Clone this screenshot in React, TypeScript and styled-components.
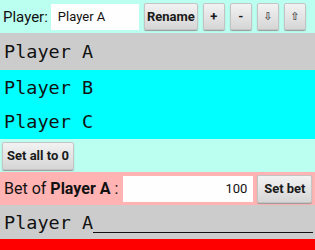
import { FC } from 'react';
import styled, { createGlobalStyle } from 'styled-components';

const GlobalStyle = createGlobalStyle`
  html, body {
    margin: 0;
    padding: 0;
    background: #bbfff0;
  }
  body {
    font-family: Roboto, 'Liberation Sans', sans-serif;
    width: 315px;
    height: 250px;
    overflow: hidden;
  }
`;

const Page = styled.div`
  display: flex;
  flex-direction: column;
  width: 315px;
`;

const TopBar = styled.div`
  display: flex;
  align-items: center;
  height: 33px;
  padding: 0 4px 0 3px;
  box-sizing: border-box;
  background: #bbfff0;
`;

const Label = styled.span`
  font-size: 15px;
  color: #111;
  margin-right: 3px;
`;

const TextInput = styled.input<{ $width: number; $align?: string }>`
  width: ${props => props.$width}px;
  height: 26px;
  box-sizing: border-box;
  border: none;
  background: #fffefe;
  font-family: Roboto, 'Liberation Sans', sans-serif;
  font-size: 13px;
  color: #111;
  padding: 0 6px 0 7px;
  text-align: ${props => props.$align || 'left'};
  outline: none;
`;

const Button = styled.button<{ $width?: number }>`
  height: 27px;
  width: ${props => (props.$width ? `${props.$width}px` : 'auto')};
  padding: 0 3px;
  margin-left: 5px;
  box-sizing: border-box;
  border: 1px solid #c4c4c4;
  border-radius: 2px;
  background: linear-gradient(#f2f2f2, #d6d6d6);
  box-shadow: 0 1px 1px #9a9a9a;
  font-family: Roboto, 'Liberation Sans', sans-serif;
  font-weight: bold;
  font-size: 13px;
  color: #1a1a1a;
  white-space: nowrap;
  display: flex;
  align-items: center;
  justify-content: center;
`;

const ArrowGlyph = styled.span`
  font-family: 'DejaVu Sans', sans-serif;
  font-size: 11px;
  font-weight: bold;
  color: #555555;
`;

const PlayerRow = styled.div<{ $selected?: boolean }>`
  height: ${props => (props.$selected ? 37 : 34.5)}px;
  display: flex;
  align-items: center;
  padding-left: 4px;
  background: ${props => (props.$selected ? '#cccccc' : '#00ffff')};
  font-family: 'DejaVu Sans Mono', monospace;
  font-size: 18.5px;
  color: #111;
`;

const ActionBar = styled.div`
  display: flex;
  align-items: center;
  height: 33px;
  padding: 0 2px;
  box-sizing: border-box;
  background: #bbfff0;

  ${Button} {
    margin-left: 0;
    height: 28px;
    padding: 0 4px;
  }
`;

const BetBar = styled.div`
  display: flex;
  align-items: center;
  height: 33px;
  padding: 0 2px 0 4px;
  box-sizing: border-box;
  background: #ffb3b3;

  ${Button} {
    margin-left: 4px;
    width: 55px;
    height: 28px;
  }
`;

const BetLabel = styled.span`
  font-size: 16px;
  color: #111;
  margin-right: 5px;
  white-space: nowrap;

  b {
    font-weight: bold;
  }
`;

const StatusRow = styled.div`
  height: 34px;
  display: flex;
  align-items: center;
  padding: 0 2px 0 4px;
  background: #cccccc;
  font-family: 'DejaVu Sans Mono', monospace;
  font-size: 18.5px;
  color: #111;
`;

const Underline = styled.span`
  flex: 1;
  align-self: flex-end;
  margin-bottom: 6px;
  border-bottom: 1.5px solid #111;
`;

const RedBar = styled.div`
  height: 12px;
  background: #ff0000;
`;

const players = ['Player A', 'Player B', 'Player C'];

const App: FC = () => {
  const selected = 'Player A';

  return (
    <Page>
      <GlobalStyle />
      <TopBar>
        <Label>Player:</Label>
        <TextInput $width={88} defaultValue={selected} />
        <Button $width={54}>Rename</Button>
        <Button $width={22}>+</Button>
        <Button $width={22}>-</Button>
        <Button $width={22}>
          <ArrowGlyph>⇩</ArrowGlyph>
        </Button>
        <Button $width={22}>
          <ArrowGlyph>⇧</ArrowGlyph>
        </Button>
      </TopBar>

      {players.map(name => (
        <PlayerRow key={name} $selected={name === selected}>
          {name}
        </PlayerRow>
      ))}

      <ActionBar>
        <Button>Set all to 0</Button>
      </ActionBar>

      <BetBar>
        <BetLabel>
          Bet of <b>{selected}</b> :
        </BetLabel>
        <TextInput $width={130} $align="right" defaultValue="100" />
        <Button>Set bet</Button>
      </BetBar>

      <StatusRow>
        {selected}
        <Underline />
      </StatusRow>
      <RedBar />
    </Page>
  );
};

export default App;
